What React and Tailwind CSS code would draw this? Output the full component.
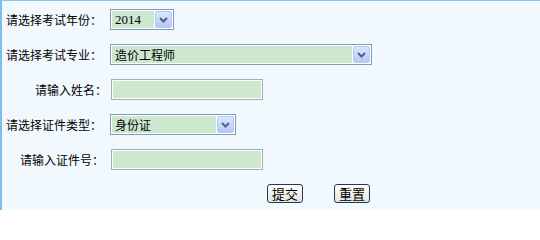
import React from 'react';

const font = { fontFamily: '"Noto Sans CJK SC", "Liberation Sans", sans-serif' };

const Arrow = () => (
  <div className="w-[17px] h-[17px] rounded-[2px] border border-[#b9c9ef] bg-gradient-to-b from-[#dce6fd] to-[#b5c8f7] flex items-center justify-center">
    <svg width="9" height="6" viewBox="0 0 9 6">
      <path d="M1 1 L4.5 4.5 L8 1" fill="none" stroke="#4d6185" strokeWidth="2" />
    </svg>
  </div>
);

const FakeSelect = ({ value, width, serif }) => (
  <div
    className="h-[21px] border border-[#7f9db9] bg-white flex items-center p-[1px] gap-[1px]"
    style={{ width }}
  >
    <div
      className={`flex-1 h-full bg-[#cce8cf] text-[12px] text-black leading-[17px] pl-[3px] ${serif ? 'font-["Liberation_Serif"] text-[13px]' : ''}`}
    >
      {value}
    </div>
    <Arrow />
  </div>
);

const FakeInput = () => (
  <div className="ml-[1px] w-[152px] h-[21px] border border-[#a5acb2] bg-white p-[1px]">
    <div className="w-full h-full bg-[#cce8cf]" />
  </div>
);

const Row = ({ label, pr, children }) => (
  <div className="h-[35px] flex items-center">
    <div className="w-[106px] shrink-0 text-right text-[12px] text-black" style={{ paddingRight: pr }}>
      {label}
    </div>
    <div className="pl-[2px] flex items-center">{children}</div>
  </div>
);

const Btn = ({ children }) => (
  <button className="w-[36px] h-[19px] rounded-[3px] border border-[#1c3a59] bg-gradient-to-b from-white to-[#e6e4dc] text-[13px] leading-[15px] text-black">
    {children}
  </button>
);

export default function App() {
  return (
    <div
      className="w-[540px] h-[210px] bg-[#f2f9fe] border-t border-l-2 border-t-[#8cc4ec] border-l-[#7dbfe8] overflow-hidden"
      style={font}
    >
      <div className="pt-[1px]">
        <Row label="请选择考试年份：" pr={6}>
          <FakeSelect value="2014" width={64} serif />
        </Row>
        <Row label="请选择考试专业：" pr={6}>
          <FakeSelect value="造价工程师" width={262} />
        </Row>
        <Row label="请输入姓名：" pr={1}>
          <FakeInput />
        </Row>
        <Row label="请选择证件类型：" pr={6}>
          <FakeSelect value="身份证" width={126} />
        </Row>
        <Row label="请输入证件号：" pr={4}>
          <FakeInput />
        </Row>
        <div className="h-[33px] flex items-center pl-[265px] gap-[31px]">
          <Btn>提交</Btn>
          <Btn>重置</Btn>
        </div>
      </div>
    </div>
  );
}
